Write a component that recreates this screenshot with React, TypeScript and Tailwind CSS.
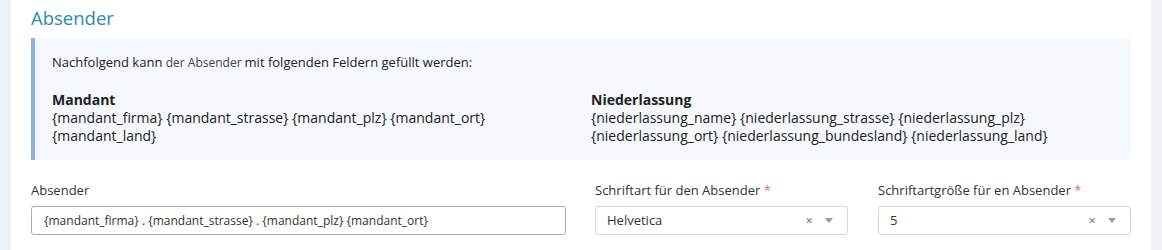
const font = { fontFamily: '"Open Sans", "Liberation Sans", sans-serif' };

function Select({ label, value }: { label: string; value: string }) {
  return (
    <div className="w-[253px]">
      <div className="text-[13px] text-[#333] h-[18px] leading-[18px] mb-[7px]">
        {label} <span className="text-[#e8686b]">*</span>
      </div>
      <div className="h-[29px] border border-[#d3d8e0] rounded-[3px] flex items-center pl-[11px] pr-[14px] text-[13px] text-[#333]">
        <span className="flex-1">{value}</span>
        <span className="text-[#999] text-[13px] font-bold mr-[12px] leading-none">×</span>
        <span className="w-0 h-0 border-l-[4px] border-r-[4px] border-t-[5px] border-l-transparent border-r-transparent border-t-[#999]" />
      </div>
    </div>
  );
}

export default function App() {
  return (
    <div className="w-[1162px] h-[250px] bg-[#eef1f6] overflow-hidden" style={font}>
      <div className="ml-[11px] w-[1140px] h-full bg-white pl-[20px] pr-[20px]">
        <h2 className="text-[18.5px] text-[#2b8ba8] leading-[28px] pt-[4px] h-[38px]">Absender</h2>
        <div className="w-[1100px] h-[122px] bg-[#f5f8fc] border-l-[4px] border-[#8db1e3] rounded-r-[4px] pl-[17px] pt-[14px] text-[13px] text-[#222] leading-[17.5px]">
          <p className="leading-[20px]">
            Nachfolgend kann <span className="text-[12px] text-[#444] mr-[3px]">der Absender</span>mit folgenden Feldern gefüllt werden:
          </p>
          <div className="flex mt-[18px] text-[14px]">
            <div className="w-[539px]">
              <div className="font-bold leading-[18px]">Mandant</div>
              <div className="w-[450px]">
                {'{mandant_firma} {mandant_strasse} {mandant_plz} {mandant_ort} {mandant_land}'}
              </div>
            </div>
            <div>
              <div className="font-bold leading-[18px]">Niederlassung</div>
              <div className="w-[470px]">
                {'{niederlassung_name} {niederlassung_strasse} {niederlassung_plz} {niederlassung_ort} {niederlassung_bundesland} {niederlassung_land}'}
              </div>
            </div>
          </div>
        </div>
        <div className="flex mt-[21px]">
          <div className="w-[535px] mr-[29px]">
            <div className="text-[13px] text-[#333] h-[18px] leading-[18px] mb-[7px]">Absender</div>
            <div className="h-[29px] border border-[#a3acba] rounded-[3px] flex items-center pl-[12px] text-[12px] text-[#333]">
              {'{mandant_firma} . {mandant_strasse} . {mandant_plz} {mandant_ort}'}
            </div>
          </div>
          <div className="mr-[30px]">
            <Select label="Schriftart für den Absender" value="Helvetica" />
          </div>
          <Select label="Schriftartgröße für en Absender" value="5" />
        </div>
      </div>
    </div>
  );
}
